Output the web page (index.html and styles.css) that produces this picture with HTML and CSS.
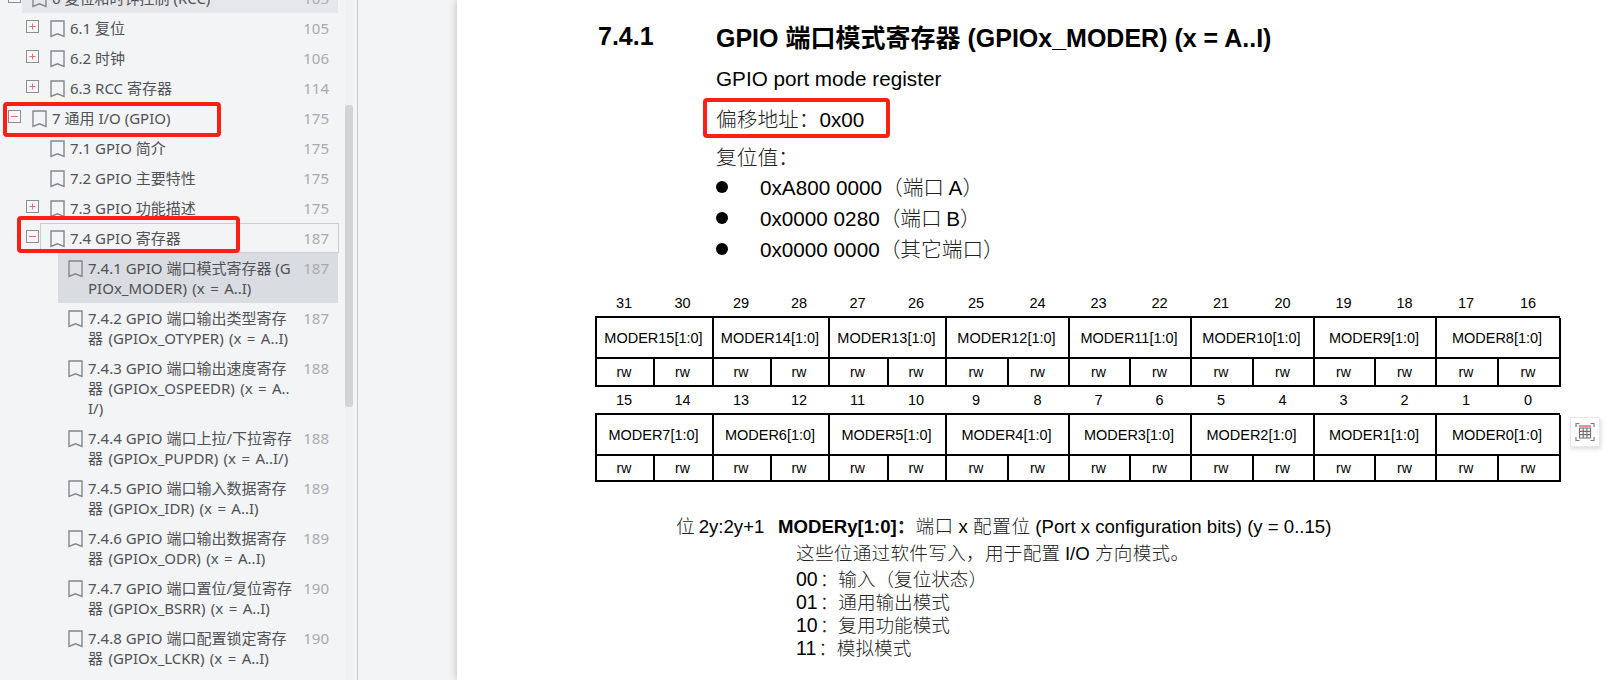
FILE: index.html
```html
<!DOCTYPE html>
<html lang="zh">
<head>
<meta charset="utf-8">
<title>GPIO 寄存器</title>
<link rel="stylesheet" href="styles.css">
</head>
<body>
<svg class="defs" width="0" height="0" aria-hidden="true">
  <symbol id="bm" viewBox="0 0 15 18"><path d="M1 1H14V16.5L7.5 13.8L1 16.5Z" fill="none" stroke="#85878a" stroke-width="1.4"/></symbol>
  <symbol id="plus" viewBox="0 0 13 13"><rect x=".5" y=".5" width="12" height="12" fill="#f6f7f9" stroke="#8b8d90"/><path d="M3.5 6.5H9.5M6.5 3.5V9.5" stroke="#f26a6a" stroke-width="1"/></symbol>
  <symbol id="minus" viewBox="0 0 13 13"><rect x=".5" y=".5" width="12" height="12" fill="#f6f7f9" stroke="#8b8d90"/><path d="M3 6.5H10" stroke="#f26a6a" stroke-width="1"/></symbol>
</svg>
<div class="app">
  <aside class="outline">
    <div class="tree">
      <div class="row l0"><span class="tg"><svg class="t"><use href="#minus"/></svg></span><div class="body dim"><svg class="b"><use href="#bm"/></svg><span class="tx">6 复位和时钟控制 (RCC)</span><span class="pg">105</span></div></div>
      <div class="row l1"><span class="tg"><svg class="t"><use href="#plus"/></svg></span><div class="body"><svg class="b"><use href="#bm"/></svg><span class="tx">6.1 复位</span><span class="pg">105</span></div></div>
      <div class="row l1"><span class="tg"><svg class="t"><use href="#plus"/></svg></span><div class="body"><svg class="b"><use href="#bm"/></svg><span class="tx">6.2 时钟</span><span class="pg">106</span></div></div>
      <div class="row l1"><span class="tg"><svg class="t"><use href="#plus"/></svg></span><div class="body"><svg class="b"><use href="#bm"/></svg><span class="tx">6.3 RCC 寄存器</span><span class="pg">114</span></div></div>
      <div class="row l0"><span class="tg"><svg class="t"><use href="#minus"/></svg></span><div class="body"><svg class="b"><use href="#bm"/></svg><span class="tx">7 通用 I/O (GPIO)</span><span class="pg">175</span></div></div>
      <div class="row l1"><span class="tg"></span><div class="body"><svg class="b"><use href="#bm"/></svg><span class="tx">7.1 GPIO 简介</span><span class="pg">175</span></div></div>
      <div class="row l1"><span class="tg"></span><div class="body"><svg class="b"><use href="#bm"/></svg><span class="tx">7.2 GPIO 主要特性</span><span class="pg">175</span></div></div>
      <div class="row l1"><span class="tg"><svg class="t"><use href="#plus"/></svg></span><div class="body"><svg class="b"><use href="#bm"/></svg><span class="tx">7.3 GPIO 功能描述</span><span class="pg">175</span></div></div>
      <div class="row l1"><span class="tg"><svg class="t"><use href="#minus"/></svg></span><div class="body hover"><svg class="b"><use href="#bm"/></svg><span class="tx">7.4 GPIO 寄存器</span><span class="pg">187</span></div></div>
      <div class="row l2"><span class="tg"></span><div class="body sel"><svg class="b"><use href="#bm"/></svg><span class="tx">7.4.1 GPIO 端口模式寄存器 (G<br><span class="ln2">PIOx_MODER) (x = A..I)</span></span><span class="pg">187</span></div></div>
      <div class="row l2"><span class="tg"></span><div class="body"><svg class="b"><use href="#bm"/></svg><span class="tx">7.4.2 GPIO 端口输出类型寄存<br><span class="ln2">器 (GPIOx_OTYPER) (x = A..I)</span></span><span class="pg">187</span></div></div>
      <div class="row l2"><span class="tg"></span><div class="body"><svg class="b"><use href="#bm"/></svg><span class="tx">7.4.3 GPIO 端口输出速度寄存<br><span class="ln2">器 (GPIOx_OSPEEDR) (x = A..</span><br>I/)</span><span class="pg">188</span></div></div>
      <div class="row l2"><span class="tg"></span><div class="body"><svg class="b"><use href="#bm"/></svg><span class="tx">7.4.4 GPIO 端口上拉/下拉寄存<br><span class="ln2">器 (GPIOx_PUPDR) (x = A..I/)</span></span><span class="pg">188</span></div></div>
      <div class="row l2"><span class="tg"></span><div class="body"><svg class="b"><use href="#bm"/></svg><span class="tx">7.4.5 GPIO 端口输入数据寄存<br><span class="ln2">器 (GPIOx_IDR) (x = A..I)</span></span><span class="pg">189</span></div></div>
      <div class="row l2"><span class="tg"></span><div class="body"><svg class="b"><use href="#bm"/></svg><span class="tx">7.4.6 GPIO 端口输出数据寄存<br><span class="ln2">器 (GPIOx_ODR) (x = A..I)</span></span><span class="pg">189</span></div></div>
      <div class="row l2"><span class="tg"></span><div class="body"><svg class="b"><use href="#bm"/></svg><span class="tx">7.4.7 GPIO 端口置位/复位寄存<br><span class="ln2">器 (GPIOx_BSRR) (x = A..I)</span></span><span class="pg">190</span></div></div>
      <div class="row l2"><span class="tg"></span><div class="body"><svg class="b"><use href="#bm"/></svg><span class="tx">7.4.8 GPIO 端口配置锁定寄存<br><span class="ln2">器 (GPIOx_LCKR) (x = A..I)</span></span><span class="pg">190</span></div></div>
    </div>
    <div class="mark mark-a"></div>
    <div class="mark mark-b"></div>
  </aside>
  <div class="scrollbar"><div class="thumb"></div></div>
  <div class="gutter"></div>
  <main class="page">
    <h2 class="heading"><span class="num">7.4.1</span><span>GPIO <span class="hz">端口模式寄存器</span> (GPIOx_MODER) (x = A..I)</span></h2>
    <div class="intro">
      <p class="l-a">GPIO port mode register</p>
      <p class="l-b"><span class="zh">偏移地址：</span>0x00</p>
      <p class="l-c"><span class="zh">复位值：</span></p>
      <ul class="vals">
        <li>0xA800 0000<span class="zh">（端口 </span>A<span class="zh">）</span></li>
        <li>0x0000 0280<span class="zh">（端口 </span>B<span class="zh">）</span></li>
        <li>0x0000 0000<span class="zh">（其它端口）</span></li>
      </ul>
    </div>
    <section class="reg reg-hi">
      <div class="bits">
        <span>31</span><span>30</span><span>29</span><span>28</span><span>27</span><span>26</span><span>25</span><span>24</span><span>23</span><span>22</span><span>21</span><span>20</span><span>19</span><span>18</span><span>17</span><span>16</span>
      </div>
      <div class="cells">
        <div class="f">MODER15[1:0]</div><div class="f">MODER14[1:0]</div><div class="f">MODER13[1:0]</div><div class="f">MODER12[1:0]</div><div class="f">MODER11[1:0]</div><div class="f">MODER10[1:0]</div><div class="f">MODER9[1:0]</div><div class="f">MODER8[1:0]</div>
        <div class="a">rw</div><div class="a">rw</div><div class="a">rw</div><div class="a">rw</div><div class="a">rw</div><div class="a">rw</div><div class="a">rw</div><div class="a">rw</div><div class="a">rw</div><div class="a">rw</div><div class="a">rw</div><div class="a">rw</div><div class="a">rw</div><div class="a">rw</div><div class="a">rw</div><div class="a">rw</div>
      </div>
    </section>
    <section class="reg reg-lo">
      <div class="bits">
        <span>15</span><span>14</span><span>13</span><span>12</span><span>11</span><span>10</span><span>9</span><span>8</span><span>7</span><span>6</span><span>5</span><span>4</span><span>3</span><span>2</span><span>1</span><span>0</span>
      </div>
      <div class="cells">
        <div class="f">MODER7[1:0]</div><div class="f">MODER6[1:0]</div><div class="f">MODER5[1:0]</div><div class="f">MODER4[1:0]</div><div class="f">MODER3[1:0]</div><div class="f">MODER2[1:0]</div><div class="f">MODER1[1:0]</div><div class="f">MODER0[1:0]</div>
        <div class="a">rw</div><div class="a">rw</div><div class="a">rw</div><div class="a">rw</div><div class="a">rw</div><div class="a">rw</div><div class="a">rw</div><div class="a">rw</div><div class="a">rw</div><div class="a">rw</div><div class="a">rw</div><div class="a">rw</div><div class="a">rw</div><div class="a">rw</div><div class="a">rw</div><div class="a">rw</div>
      </div>
    </section>
    <section class="desc">
      <div class="desc-head"><span class="lbl"><span class="zh">位 </span>2y:2y+1</span><span><b>MODERy[1:0]</b><b class="zh">：</b><span class="zh wide">端口 </span>x <span class="zh wide">配置位 </span>(Port x configuration bits) (y = 0..15)</span></div>
      <div class="desc-body">
        <p class="para"><span class="zh para-zh">这些位通过软件写入，用于配置 </span>I/O <span class="zh para-zh">方向模式。</span></p>
        <p class="opt"><span class="code">00</span><span class="zh">：输入（复位状态）</span></p>
        <p class="opt"><span class="code">01</span><span class="zh">：通用输出模式</span></p>
        <p class="opt"><span class="code">10</span><span class="zh">：复用功能模式</span></p>
        <p class="opt"><span class="code">11</span><span class="zh">：模拟模式</span></p>
      </div>
    </section>
    <div class="mark mark-c"></div>
    <button class="fab" aria-label="表格">
      <svg width="20" height="20" viewBox="0 0 20 20" fill="none">
        <path d="M1 5V1.5H4.5M15.5 1.5H19V5M19 15V18.5H15.5M4.5 18.5H1V15" stroke="#7d7f82" stroke-width="1.2"/>
        <rect x="4" y="3" width="12" height="2" fill="#ee8f8f"/>
        <path d="M4.5 6H15.5V16H4.5ZM8.2 6V16M11.9 6V16M4.5 9.3H15.5M4.5 12.7H15.5" stroke="#707275" stroke-width="1.2"/>
      </svg>
    </button>
  </main>
</div>
</body>
</html>
```
FILE: styles.css
```css
* { box-sizing: border-box; }
html, body { margin: 0; padding: 0; height: 100%; overflow: hidden; }
body { background: #f3f4f6; font-family: "Noto Sans", "Noto Sans CJK SC", sans-serif; }
.defs { position: absolute; }

.app { display: flex; height: 680px; overflow: hidden; }

.outline { position: relative; width: 345px; flex: none; overflow: hidden; }
.tree { margin-top: -17px; }
.row { display: flex; align-items: flex-start; width: 338px; }
.l0 { padding-left: 8px; }
.l1 { padding-left: 26px; }
.l2 { padding-left: 44px; }
.tg { width: 14px; flex: none; padding-top: 7px; height: 22px; }
.t { display: block; width: 13px; height: 13px; }
.body { flex: 1; display: flex; align-items: flex-start; padding: 5px 9px 5px 10px; min-width: 0; }
.dim { background: #e6e7ea; }
.sel { background: #d9dce1; }
.hover { box-shadow: inset 0 0 0 1px #c9ccd4; margin-right: -1px; padding-right: 10px; }
.b { width: 15px; height: 18px; flex: none; margin: 2px 5px 0 0; }
.tx { flex: 1; font-size: 15px; line-height: 20px; color: #505255; white-space: nowrap; }
.ln2 { word-spacing: 1.5px; }
.pg { flex: none; font-size: 15px; line-height: 20px; color: #a9abae; margin-left: 4px; }

.scrollbar { width: 8px; flex: none; background: #f0f1f2; }
.thumb { margin-top: 105px; height: 302px; background: #d2d3d4; border-radius: 3px; }
.gutter { width: 100px; flex: none; margin-left: 4px; border-left: 1px solid #c8c9cb; }

.page { position: relative; flex: 1; background: #fff; color: #000; font-family: "Liberation Sans", "Noto Sans CJK SC", sans-serif; box-shadow: 0 0 8px rgba(0,0,0,.25); min-width: 0; }
.zh { font-family: "Noto Sans CJK SC", sans-serif; font-weight: 300; color: #222; }
b.zh { font-weight: 700; }
.wide { letter-spacing: .6px; }
.para-zh { letter-spacing: .3px; }

.heading { display: flex; height: 30px; margin: 21px 0 0 141px; font-size: 25px; line-height: 30px; font-weight: 700; color: #000; }
.num { width: 118px; flex: none; }
.hz { font-family: "Noto Sans CJK SC", sans-serif; }

.intro { margin-left: 259px; font-size: 20.7px; line-height: 30px; }
.intro p { margin: 0; box-sizing: content-box; height: 30px; }
.l-a { padding-top: 13px; }
.l-b { padding-top: 9px; }
.l-c { padding-top: 8px; }
.vals { list-style: none; margin: 0; padding: 0; }
.vals li { position: relative; padding-left: 44px; height: 31px; line-height: 31px; }
.vals li::before { content: ""; position: absolute; left: 0; top: 10px; width: 12px; height: 12px; border-radius: 50%; background: #000; }

.reg { margin-left: 138px; width: 965px; }
.reg-hi { margin-top: 26px; }
.bits, .cells { display: grid; grid-template-columns: 58px 59px 58px 58px 59px 58px 62px 61px 61px 61px 62px 61px 61px 61px 62px 62px; }
.bits { height: 26px; font-size: 14.5px; line-height: 26px; text-align: center; }
.cells { border-top: 2px solid #000; border-left: 2px solid #000; }
.f, .a { display: flex; align-items: center; justify-content: center; border-right: 2px solid #000; border-bottom: 2px solid #000; margin-left: -2px; }
.f { grid-column: span 2; height: 41px; font-size: 14.5px; }
.a { height: 28px; font-size: 14px; }
.reg-lo .a { height: 26px; }

.desc { margin: 31px 0 0 219px; font-size: 18.6px; line-height: 23.3px; }
.desc-head { display: flex; height: 23.3px; }
.lbl { width: 102px; flex: none; }
.desc-body { margin: 4px 0 0 120px; }
.desc-body p { margin: 0; height: 23.3px; }
.para { margin-bottom: 2px !important; }
.opt { display: flex; align-items: baseline; }
.code { font-size: 19.5px; margin-right: 2px; }

.fab { position: absolute; left: 1113px; top: 417px; width: 30px; height: 30px; padding: 0; display: flex; align-items: center; justify-content: center; background: #fff; border: 1px solid #e8e8e8; box-shadow: 1px 2px 4px rgba(0,0,0,.14); }

.mark { position: absolute; border: 4px solid #fb2014; border-radius: 4px; pointer-events: none; }
.mark-a { left: 3px; top: 102px; width: 218px; height: 35px; }
.mark-b { left: 17px; top: 216px; width: 223px; height: 37px; }
.mark-c { left: 246px; top: 98px; width: 187px; height: 40px; }
```
